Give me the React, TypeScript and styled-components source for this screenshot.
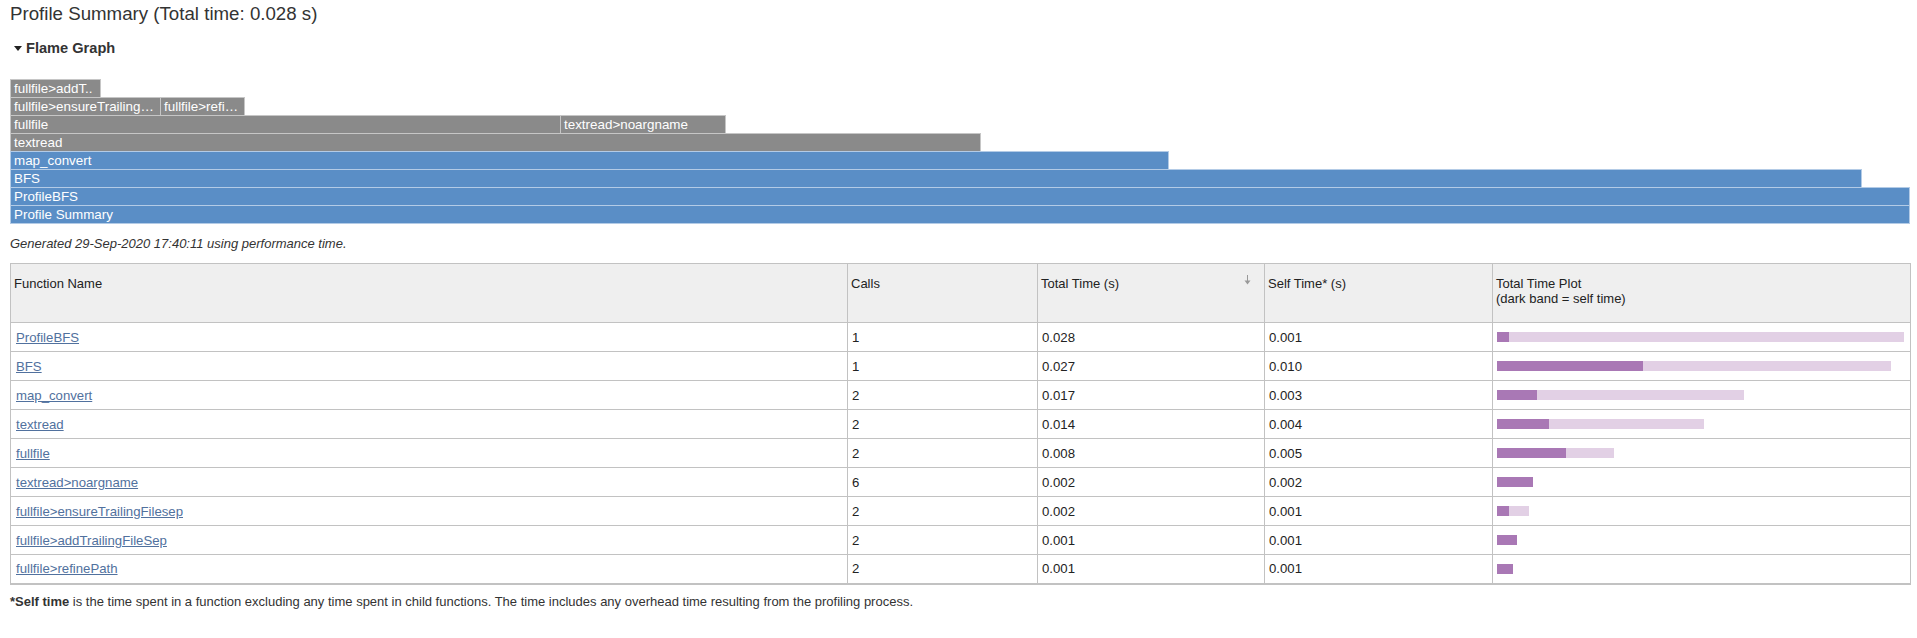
import React from 'react'
import styled, {createGlobalStyle} from 'styled-components'

//** data
interface FlameBar {
  label: string
  width: number
  kind: 'gray' | 'blue'
}

interface ProfileRow {
  name: string
  calls: number
  total: string
  self: string
  totalPx: number
  selfPx: number
}

const flameRows: FlameBar[][] = [
  [{label: 'fullfile>addT..', width: 91, kind: 'gray'}],
  [
    {label: 'fullfile>ensureTrailing…', width: 151, kind: 'gray'},
    {label: 'fullfile>refi…', width: 85, kind: 'gray'},
  ],
  [
    {label: 'fullfile', width: 551, kind: 'gray'},
    {label: 'textread>noargname', width: 166, kind: 'gray'},
  ],
  [{label: 'textread', width: 971, kind: 'gray'}],
  [{label: 'map_convert', width: 1159, kind: 'blue'}],
  [{label: 'BFS', width: 1852, kind: 'blue'}],
  [{label: 'ProfileBFS', width: 1900, kind: 'blue'}],
  [{label: 'Profile Summary', width: 1900, kind: 'blue'}],
]

const rows: ProfileRow[] = [
  {name: 'ProfileBFS', calls: 1, total: '0.028', self: '0.001', totalPx: 407, selfPx: 12},
  {name: 'BFS', calls: 1, total: '0.027', self: '0.010', totalPx: 394, selfPx: 146},
  {name: 'map_convert', calls: 2, total: '0.017', self: '0.003', totalPx: 247, selfPx: 40},
  {name: 'textread', calls: 2, total: '0.014', self: '0.004', totalPx: 207, selfPx: 52},
  {name: 'fullfile', calls: 2, total: '0.008', self: '0.005', totalPx: 117, selfPx: 69},
  {name: 'textread>noargname', calls: 6, total: '0.002', self: '0.002', totalPx: 36, selfPx: 36},
  {name: 'fullfile>ensureTrailingFilesep', calls: 2, total: '0.002', self: '0.001', totalPx: 32, selfPx: 12},
  {name: 'fullfile>addTrailingFileSep', calls: 2, total: '0.001', self: '0.001', totalPx: 20, selfPx: 20},
  {name: 'fullfile>refinePath', calls: 2, total: '0.001', self: '0.001', totalPx: 16, selfPx: 16},
]

const color = {
  text: '#333',
  cell: '#222',
  link: '#51719e',
  gray: '#8a8a8a',
  grayEdge: '#c6c6c6',
  blue: '#5a8ec6',
  blueEdge: '#b3cbe6',
  border: '#c2c2c2',
  head: '#efefef',
  dark: '#a978b5',
  light: '#e2d0e5',
}

const GlobalStyle = createGlobalStyle`
  body {
    margin: 0;
    background: #fff;
    font-family: "Liberation Sans", Arial, sans-serif;
    color: ${color.text};
  }
`

const SortArrow = () => (
  <svg width="7" height="10" viewBox="0 0 7 10">
    <line x1="3.5" y1="0" x2="3.5" y2="7" stroke="#999" strokeWidth="1" />
    <path d="M0.5 5.5 L3.5 9.5 L6.5 5.5 Z" fill="#999" />
  </svg>
)

export default function App() {
  return (
    <Page>
      <GlobalStyle />
      <Title>Profile Summary (Total time: 0.028 s)</Title>

      <Summary>
        <Caret />
        Flame Graph
      </Summary>

      {/** flame graph **/}
      <Flame>
        {flameRows.map((row, i) => (
          <FlameRow key={i}>
            {row.map(bar => (
              <Bar key={bar.label} $kind={bar.kind} style={{width: bar.width}}>
                {bar.label}
              </Bar>
            ))}
          </FlameRow>
        ))}
      </Flame>

      <Generated>Generated 29-Sep-2020 17:40:11 using performance time.</Generated>

      {/** table **/}
      <Table>
        <colgroup>
          <col style={{width: 837}} />
          <col style={{width: 190}} />
          <col style={{width: 227}} />
          <col style={{width: 228}} />
          <col style={{width: 418}} />
        </colgroup>
        <thead>
          <tr>
            <Th>Function Name</Th>
            <Th>Calls</Th>
            <Th>
              <SortHead>
                <span>Total Time (s)</span>
                <SortArrow />
              </SortHead>
            </Th>
            <Th>Self Time* (s)</Th>
            <Th>
              Total Time Plot
              <br />
              (dark band = self time)
            </Th>
          </tr>
        </thead>
        <tbody>
          {rows.map(row => (
            <tr key={row.name}>
              <Td>
                <FnLink href="#">{row.name}</FnLink>
              </Td>
              <Td>{row.calls}</Td>
              <Td>{row.total}</Td>
              <Td>{row.self}</Td>
              <Td>
                <Plot style={{width: row.totalPx}}>
                  <SelfBand style={{width: row.selfPx}} />
                </Plot>
              </Td>
            </tr>
          ))}
        </tbody>
      </Table>

      <Footnote>
        <strong>*Self time</strong> is the time spent in a function excluding any time spent in child
        functions. The time includes any overhead time resulting from the profiling process.
      </Footnote>
    </Page>
  )
}

const Page = styled.div`
  padding: 3px 7px 20px 10px;
`
const Title = styled.h1`
  margin: 0;
  font-size: 18.7px;
  line-height: 21px;
  font-weight: normal;
  color: ${color.text};
`
const Summary = styled.div`
  display: flex;
  align-items: center;
  gap: 4px;
  margin-top: 16px;
  padding-left: 4px;
  font-size: 14.6px;
  line-height: 17px;
  font-weight: bold;
  color: ${color.text};
`
const Caret = styled.span`
  width: 0;
  height: 0;
  border-left: 4px solid transparent;
  border-right: 4px solid transparent;
  border-top: 5px solid #222;
`
const Flame = styled.div`
  display: flex;
  flex-direction: column;
  margin-top: 22px;
`
const FlameRow = styled.div`
  display: flex;
  & + & {
    margin-top: -1px;
  }
`
const Bar = styled.div<{$kind: 'gray' | 'blue'}>`
  box-sizing: border-box;
  height: 19px;
  padding: 0 3px;
  background: ${p => (p.$kind === 'gray' ? color.gray : color.blue)};
  border: 1px solid ${p => (p.$kind === 'gray' ? color.grayEdge : color.blueEdge)};
  color: #fff;
  font-size: 13.4px;
  line-height: 18px;
  white-space: nowrap;
  overflow: hidden;

  & + & {
    margin-left: -1px;
  }
`
const Generated = styled.p`
  margin: 12px 0 0;
  font-size: 13px;
  line-height: 15px;
  font-style: italic;
  color: ${color.text};
`
const Table = styled.table`
  width: 1900px;
  margin-top: 12px;
  table-layout: fixed;
  border-collapse: collapse;
  border-bottom: 2px solid ${color.border};
  font-size: 13.2px;
  color: ${color.cell};
`
const Th = styled.th`
  height: 59px;
  padding: 12px 4px 0 3px;
  box-sizing: border-box;
  vertical-align: top;
  text-align: left;
  font-weight: normal;
  font-size: 13px;
  line-height: 15px;
  background: ${color.head};
  border: 1px solid ${color.border};
`
const SortHead = styled.div`
  display: flex;
  justify-content: space-between;
  align-items: flex-start;
  padding-right: 9px;

  & svg {
    margin-top: -1px;
  }
`
const Td = styled.td`
  height: 29px;
  padding: 0 4px;
  box-sizing: border-box;
  vertical-align: middle;
  line-height: 15px;
  border: 1px solid ${color.border};
`
const FnLink = styled.a`
  margin-left: 1px;
  color: ${color.link};
  text-decoration: underline;
`
const Plot = styled.div`
  display: flex;
  height: 10px;
  background: ${color.light};
`
const SelfBand = styled.div`
  height: 100%;
  background: ${color.dark};
`
const Footnote = styled.p`
  margin: 9px 0 0;
  font-size: 13px;
  line-height: 15px;
  color: ${color.text};
`
